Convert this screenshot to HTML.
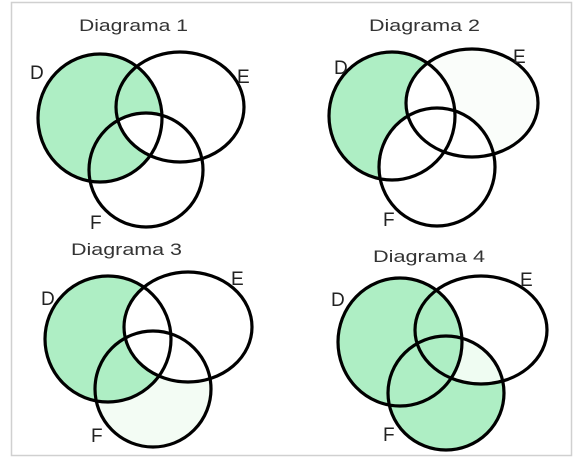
<!DOCTYPE html>
<html><head><meta charset="utf-8"><style>
html,body{margin:0;padding:0;background:#fff;width:583px;height:459px;overflow:hidden}
svg{display:block}
text{font-family:"Liberation Sans",sans-serif;fill:#333;font-size:17px}
text.l{font-size:19px;fill:#222}
</style></head><body>
<svg width="583" height="459" viewBox="0 0 583 459">
<defs>
<clipPath id="c1F"><ellipse cx="146" cy="170" rx="57" ry="57"/></clipPath>
<clipPath id="c2D"><ellipse cx="392" cy="116" rx="63" ry="64"/></clipPath>
<clipPath id="c4E"><ellipse cx="481" cy="330" rx="66" ry="54"/></clipPath>
</defs>
<rect x="11.5" y="2.5" width="560" height="453" fill="#fff" stroke="#d0d0d0" stroke-width="1.5"/>
<g stroke="none">
<ellipse cx="100" cy="118" rx="62" ry="64" fill="#aeeec4"/>
<ellipse cx="180" cy="107" rx="64" ry="55" fill="#fff" clip-path="url(#c1F)"/>
<ellipse cx="472" cy="103" rx="66" ry="54" fill="#fafdfa"/>
<ellipse cx="392" cy="116" rx="63" ry="64" fill="#aeeec4"/>
<ellipse cx="472" cy="103" rx="66" ry="54" fill="#fff" clip-path="url(#c2D)"/>
<ellipse cx="437" cy="167" rx="58" ry="59" fill="#fff"/>
<ellipse cx="153" cy="389" rx="58" ry="58" fill="#f3fcf4"/>
<ellipse cx="108" cy="339" rx="63" ry="63" fill="#aeeec4"/>
<ellipse cx="188" cy="327" rx="64" ry="55" fill="#fff"/>
<ellipse cx="446" cy="393" rx="58" ry="57" fill="#aeeec4"/>
<ellipse cx="446" cy="393" rx="58" ry="57" fill="#effcf2" clip-path="url(#c4E)"/>
<ellipse cx="400" cy="342" rx="62" ry="64" fill="#aeeec4"/>
</g>
<g fill="none" stroke="#000" stroke-width="3.2">
<ellipse cx="100" cy="118" rx="62" ry="64"/>
<ellipse cx="180" cy="107" rx="64" ry="55"/>
<ellipse cx="146" cy="170" rx="57" ry="57"/>
<ellipse cx="392" cy="116" rx="63" ry="64"/>
<ellipse cx="472" cy="103" rx="66" ry="54"/>
<ellipse cx="437" cy="167" rx="58" ry="59"/>
<ellipse cx="108" cy="339" rx="63" ry="63"/>
<ellipse cx="188" cy="327" rx="64" ry="55"/>
<ellipse cx="153" cy="389" rx="58" ry="58"/>
<ellipse cx="400" cy="342" rx="62" ry="64"/>
<ellipse cx="481" cy="330" rx="66" ry="54"/>
<ellipse cx="446" cy="393" rx="58" ry="57"/>
</g>
<text x="79" y="31" textLength="109" lengthAdjust="spacingAndGlyphs">Diagrama 1</text>
<text x="369" y="31" textLength="111" lengthAdjust="spacingAndGlyphs">Diagrama 2</text>
<text x="71" y="255" textLength="111" lengthAdjust="spacingAndGlyphs">Diagrama 3</text>
<text x="373" y="262" textLength="112" lengthAdjust="spacingAndGlyphs">Diagrama 4</text>
<text class="l" x="30" y="79">D</text><text class="l" x="237" y="83">E</text><text class="l" x="90" y="229">F</text>
<text class="l" x="334" y="74">D</text><text class="l" x="513" y="63">E</text><text class="l" x="383" y="226">F</text>
<text class="l" x="41" y="305">D</text><text class="l" x="231" y="285">E</text><text class="l" x="91" y="442">F</text>
<text class="l" x="331" y="306">D</text><text class="l" x="520" y="286">E</text><text class="l" x="383" y="441">F</text>
</svg>
</body></html>
